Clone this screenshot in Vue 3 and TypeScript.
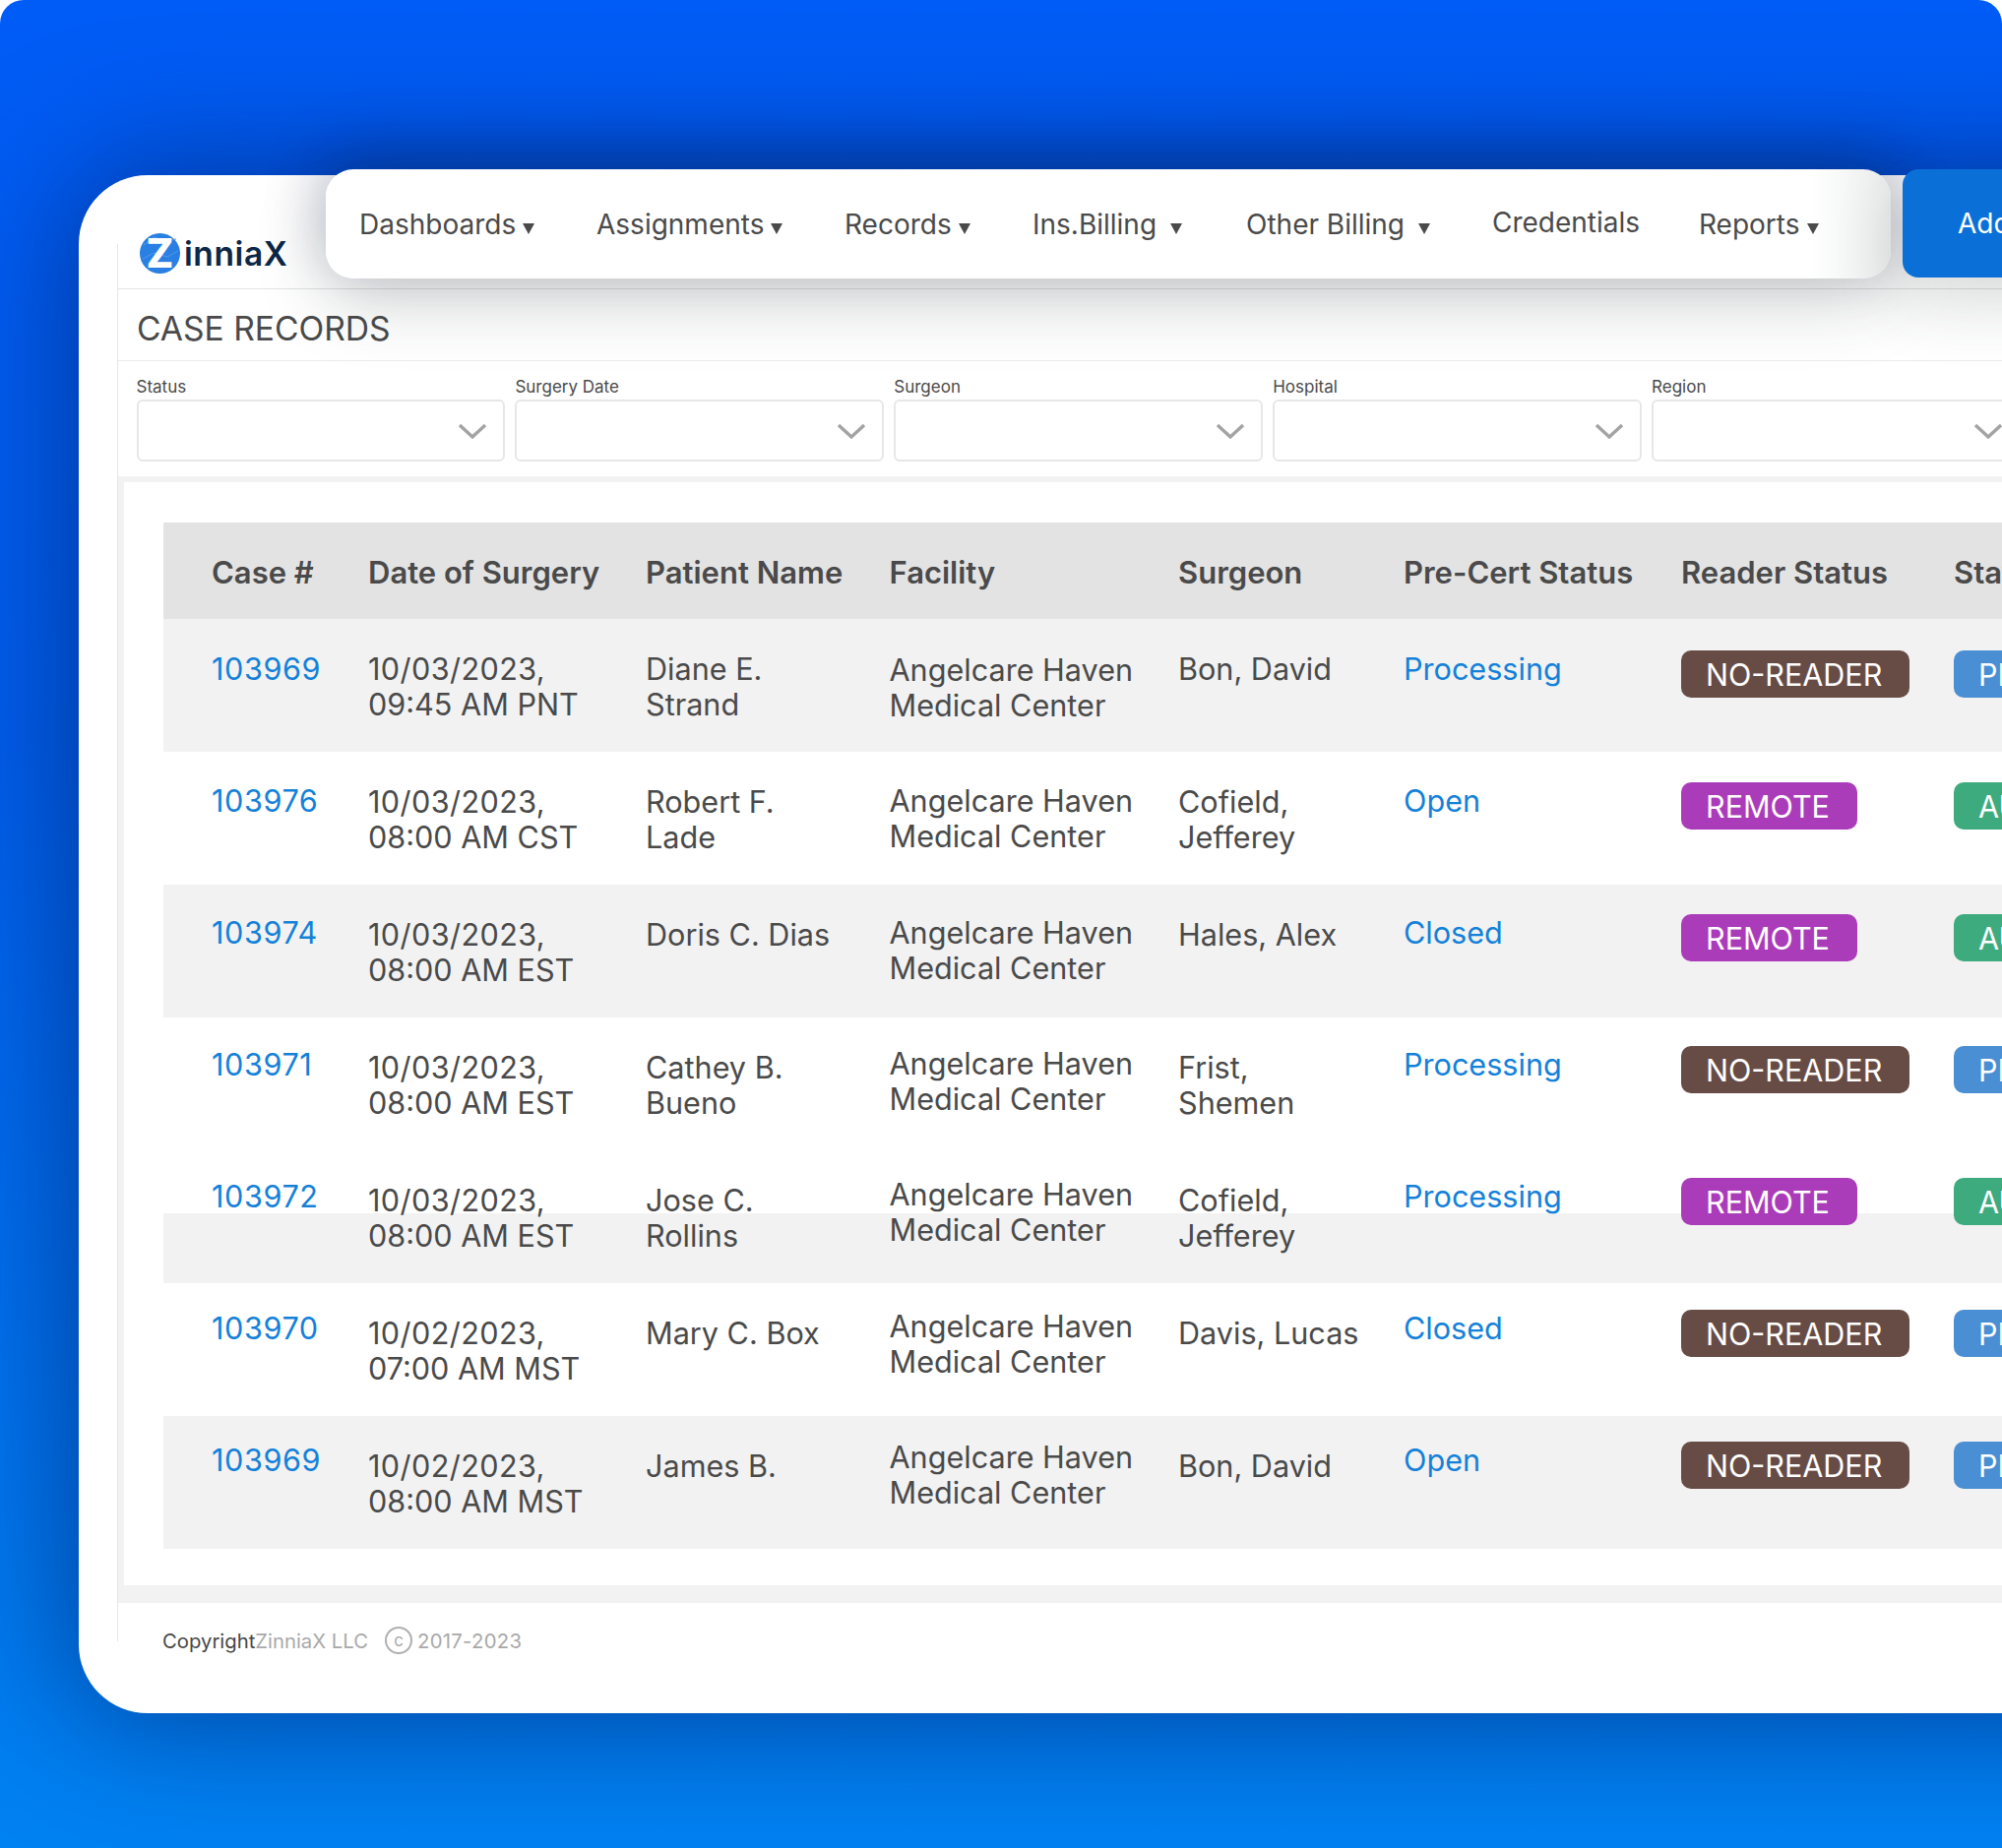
<script setup lang="ts">
interface CaseRow {
  id: string;
  date: string;
  time: string;
  patient: string;
  surgeon: string;
  preCert: string;
  reader: 'NO-READER' | 'REMOTE';
}

const navItems = [
  { label: 'Dashboards', caret: true, wide: false },
  { label: 'Assignments', caret: true, wide: false },
  { label: 'Records', caret: true, wide: false },
  { label: 'Ins.Billing', caret: true, wide: true },
  { label: 'Other Billing', caret: true, wide: true },
  { label: 'Credentials', caret: false, wide: false },
  { label: 'Reports', caret: true, wide: false }
];

const filters = ['Status', 'Surgery Date', 'Surgeon', 'Hospital', 'Region'];

const columns = ['Case #', 'Date of Surgery', 'Patient Name', 'Facility', 'Surgeon', 'Pre-Cert Status', 'Reader Status', 'Status'];

const facility = 'Angelcare Haven\nMedical Center';

const rows: CaseRow[] = [
  { id: '103969', date: '10/03/2023,', time: '09:45 AM PNT', patient: 'Diane E.\nStrand', surgeon: 'Bon, David', preCert: 'Processing', reader: 'NO-READER' },
  { id: '103976', date: '10/03/2023,', time: '08:00 AM CST', patient: 'Robert F.\nLade', surgeon: 'Cofield,\nJefferey', preCert: 'Open', reader: 'REMOTE' },
  { id: '103974', date: '10/03/2023,', time: '08:00 AM EST', patient: 'Doris C. Dias', surgeon: 'Hales, Alex', preCert: 'Closed', reader: 'REMOTE' },
  { id: '103971', date: '10/03/2023,', time: '08:00 AM EST', patient: 'Cathey B.\nBueno', surgeon: 'Frist,\nShemen', preCert: 'Processing', reader: 'NO-READER' },
  { id: '103972', date: '10/03/2023,', time: '08:00 AM EST', patient: 'Jose C.\nRollins', surgeon: 'Cofield,\nJefferey', preCert: 'Processing', reader: 'REMOTE' },
  { id: '103970', date: '10/02/2023,', time: '07:00 AM MST', patient: 'Mary C. Box', surgeon: 'Davis, Lucas', preCert: 'Closed', reader: 'NO-READER' },
  { id: '103969', date: '10/02/2023,', time: '08:00 AM MST', patient: 'James B.', surgeon: 'Bon, David', preCert: 'Open', reader: 'NO-READER' }
];

// the rows of the source drift a little per column, so each cell gets its own top offset
const offset = (base: number, drift: number, i: number) => ({ paddingTop: `${base + drift * i}px` });
</script>

<template>
  <div class="page">
    <div class="card">
      <header class="topbar">
        <div class="logo">
          <svg class="logo-mark" viewBox="0 0 41 41" width="41" height="41">
            <circle cx="20.5" cy="20.5" r="20.5" fill="#2a7fe3" />
            <path d="M4 12 14 4 26 8 37 6M3 26 14 20 28 24 39 18M8 36 16 30 30 34" fill="none" stroke="#4e98ec" stroke-width="1" />
            <text x="20.5" y="35" text-anchor="middle" class="logo-z">Z</text>
          </svg>
          <span class="logo-text">inniaX</span>
        </div>
        <nav class="nav">
          <a v-for="item in navItems" :key="item.label" class="nav-item" :class="{ 'nav-plain': !item.caret }">
            {{ item.label }}<i v-if="item.caret" class="caret" :class="{ 'caret-wide': item.wide }"></i>
          </a>
        </nav>
        <button class="add-btn" type="button">Add Case</button>
      </header>

      <h1 class="title">CASE RECORDS</h1>

      <section class="filters">
        <div v-for="name in filters" :key="name" class="filter">
          <label class="filter-label">{{ name }}</label>
          <div class="select">
            <svg class="chevron" viewBox="0 0 30 16" width="30" height="16">
              <path d="M2 2 15 14 28 2" fill="none" stroke="#a3a3a3" stroke-width="3.4" />
            </svg>
          </div>
        </div>
      </section>

      <main class="content">
        <div class="panel">
          <div class="table">
            <div class="row head">
              <div v-for="col in columns" :key="col" class="th">{{ col }}</div>
            </div>
            <div
              v-for="(row, i) in rows"
              :key="row.id + i"
              class="row body"
              :class="{ shaded: i % 2 === 0 && i !== 4, split: i === 4 }"
            >
              <div class="td link case-id" :style="offset(33, -1, i)">{{ row.id }}</div>
              <div class="td" :style="offset(32.5, 0, i)">
                <span class="date">{{ row.date }}</span>
                <span class="time">{{ row.time }}</span>
              </div>
              <div class="td" :style="offset(32.5, 0, i)">{{ row.patient }}</div>
              <div class="td" :style="offset(34, -1.7, i)">{{ facility }}</div>
              <div class="td" :style="offset(32.5, 0, i)">{{ row.surgeon }}</div>
              <div class="td link" :style="offset(33, -1, i)">{{ row.preCert }}</div>
              <div class="td" :style="offset(32, -1, i)">
                <span class="badge" :class="row.reader === 'REMOTE' ? 'purple' : 'brown'">{{ row.reader }}</span>
              </div>
              <div class="td" :style="offset(32, -1, i)">
                <span class="badge" :class="row.reader === 'REMOTE' ? 'green' : 'blue'">{{ row.reader === 'REMOTE' ? 'AUTO' : 'PENDING' }}</span>
              </div>
            </div>
          </div>
        </div>
      </main>

      <footer class="footer">
        <span class="copy-dark">Copyright</span><span class="copy-light">ZinniaX LLC</span>
        <span class="copy-icon">c</span>
        <span class="copy-light copy-year">2017-2023</span>
      </footer>
    </div>
  </div>
</template>

<style>
html,
body {
  margin: 0;
  background: #fff;
}
</style>

<style scoped>
.page {
  box-sizing: border-box;
  width: 2034px;
  height: 1878px;
  padding-top: 178px;
  overflow: hidden;
  border-radius: 24px 24px 0 0;
  background: linear-gradient(180deg, #005cf6 0%, #005eec 40%, #0082f2 100%);
  font-family: Inter, "Liberation Sans", sans-serif;
  color: #4a4a4a;
}

.card {
  position: relative;
  display: flex;
  flex-direction: column;
  box-sizing: border-box;
  width: 2100px;
  height: 1563px;
  margin-left: 80px;
  padding-left: 40px;
  background: #fff;
  border-radius: 70px 0 0 70px;
  box-shadow: 0 0 130px 10px rgba(0, 25, 90, 0.55);
}

/* thin rule on the left of the inner frame */
.card::before {
  content: "";
  position: absolute;
  left: 39px;
  top: 70px;
  bottom: 73px;
  width: 1px;
  background: #e6e6e6;
}

.topbar {
  display: flex;
  align-items: flex-start;
  height: 115px;
  flex: none;
  border-bottom: 1px solid #e2e3e3;
}

.logo {
  display: flex;
  align-items: center;
  width: 211px;
  height: 41px;
  margin-top: 59px;
  padding-left: 22px;
  box-sizing: border-box;
  flex: none;
}

.logo-mark {
  flex: none;
  overflow: visible;
}

.logo-z {
  font-family: Inter, sans-serif;
  font-size: 41px;
  font-weight: 800;
  fill: #fff;
}

.logo-text {
  margin-left: 4px;
  margin-top: 1px;
  font-family: Inter, sans-serif;
  font-size: 33.5px;
  font-weight: 600;
  letter-spacing: 0.6px;
  color: #0d2747;
}

.nav {
  position: relative;
  z-index: 2;
  display: grid;
  grid-template-columns: 241px 252px 191px 217px 250px 210px auto;
  align-items: center;
  flex: none;
  box-sizing: border-box;
  width: 1590px;
  height: 111px;
  margin-top: -6px;
  padding-left: 34px;
  background: linear-gradient(90deg, #fff 95%, #ebecec 100%);
  border-radius: 28px;
  box-shadow: 0 22px 70px rgba(40, 50, 50, 0.22), 0 -20px 60px rgba(0, 20, 70, 0.25);
}

.nav-item {
  font-size: 28px;
  line-height: 36px;
  white-space: nowrap;
}

.nav-plain {
  margin-top: -3px;
}

.caret {
  display: inline-block;
  margin-left: 7px;
  border-style: solid;
  border-width: 11px 6px 0;
  border-color: #4a4a4a transparent transparent;
  vertical-align: 0;
}

.caret-wide {
  margin-left: 14px;
}

.add-btn {
  position: relative;
  z-index: 2;
  flex: none;
  width: 220px;
  height: 110px;
  margin-top: -6px;
  margin-left: 12px;
  padding: 0 0 0 56px;
  text-align: left;
  border: 0;
  border-radius: 16px;
  background: #0a70d8;
  box-shadow: 0 22px 70px rgba(40, 50, 50, 0.2);
  color: #fff;
  font-family: inherit;
  font-size: 28px;
  white-space: nowrap;
}

.title {
  flex: none;
  box-sizing: border-box;
  height: 73px;
  margin: 0;
  padding-left: 19px;
  border-bottom: 1px solid #ececec;
  font-size: 33.6px;
  font-weight: 400;
  line-height: 80px;
}

.filters {
  display: grid;
  grid-template-columns: repeat(5, 374.5px);
  column-gap: 10.4px;
  flex: none;
  box-sizing: border-box;
  height: 117px;
  padding: 16px 0 0 18.5px;
}

.filter-label {
  display: block;
  height: 23px;
  font-size: 17px;
  line-height: 20px;
}

.select {
  position: relative;
  box-sizing: border-box;
  height: 63px;
  background: #fff;
  border: 2px solid #e7e7e7;
  border-radius: 6px;
}

.chevron {
  position: absolute;
  right: 16px;
  top: 22px;
}

.content {
  flex: none;
  box-sizing: border-box;
  height: 1145px;
  padding: 6px 0 18px 6px;
  background: #f2f2f2;
}

.panel {
  box-sizing: border-box;
  height: 100%;
  padding: 41px 0 0 40px;
  background: #fff;
}

.table {
  width: 1900px;
}

.row {
  display: grid;
  grid-template-columns: 159px 282px 247.5px 293.5px 229px 282px 277px 1fr;
  padding-left: 49px;
}

.head {
  align-items: center;
  box-sizing: border-box;
  height: 98px;
  padding-top: 3px;
  background: #e3e3e3;
}

.th {
  font-size: 31px;
  font-weight: 600;
  white-space: nowrap;
}

.body {
  height: 135px;
}

.shaded {
  background: #f2f2f2;
}

.split {
  background: linear-gradient(180deg, #fff 64px, #f2f2f2 64px);
}

.td {
  font-size: 30.6px;
  line-height: 36px;
  white-space: pre-line;
}

.link {
  color: #1481d9;
}

.case-id {
  letter-spacing: 0.6px;
}

.date,
.time {
  display: block;
}

.date {
  letter-spacing: 0.4px;
}

.badge {
  display: inline-block;
  padding: 0 28px 0 25px;
  height: 48px;
  line-height: 49px;
  border-radius: 10px;
  color: #fff;
  font-size: 30.5px;
  white-space: nowrap;
}

.brown {
  background: #674c46;
}

.purple {
  background: #aa3cba;
}

.blue {
  background: #4a8fd3;
}

.green {
  background: #3dab7e;
}

.footer {
  display: flex;
  align-items: center;
  flex: none;
  box-sizing: border-box;
  height: 74px;
  padding: 2px 0 0 45px;
  font-size: 20.3px;
}

.copy-dark {
  color: #474747;
}

.copy-light {
  color: #a9a9a9;
}

.copy-year {
  letter-spacing: 0.3px;
}

.copy-icon {
  display: flex;
  align-items: center;
  justify-content: center;
  box-sizing: border-box;
  width: 28px;
  height: 28px;
  margin: 0 5px 0 17px;
  border: 2px solid #b0b0b0;
  border-radius: 50%;
  color: #a9a9a9;
  font-size: 17px;
  line-height: 1;
}
</style>
